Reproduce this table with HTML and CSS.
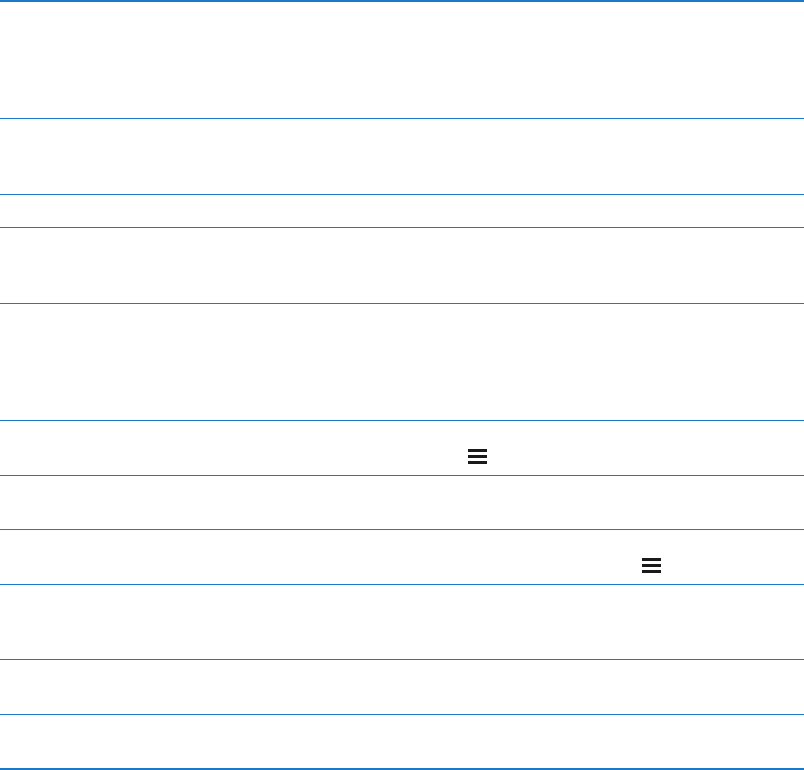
FILE: index.html
```html
<!doctype html>
<html lang="en">
<head>
  <meta charset="utf-8" />
  <meta name="viewport" content="width=device-width,initial-scale=1" />
  <title>Table</title>
  <link rel="stylesheet" href="styles.css">
</head>
<body>
  <div class="table">
    <div class="row r116"></div>
    <div class="row r75"></div>
    <div class="row r32"></div>
    <div class="row r75"></div>
    <div class="row r116"></div>
    <div class="row r54">
      <div class="cell c1">
        <svg class="menu" width="19" height="15" viewBox="0 0 19 15"><rect x="0" y="0" width="19" height="3"/><rect x="0" y="6" width="19" height="3"/><rect x="0" y="12" width="19" height="3"/></svg>
      </div>
    </div>
    <div class="row r53"></div>
    <div class="row r54">
      <div class="cell c2">
        <svg class="menu" width="19" height="15" viewBox="0 0 19 15"><rect x="0" y="0" width="19" height="3"/><rect x="0" y="6" width="19" height="3"/><rect x="0" y="12" width="19" height="3"/></svg>
      </div>
    </div>
    <div class="row r74"></div>
    <div class="row r54"></div>
    <div class="row r53 last"></div>
  </div>
</body>
</html>
```

FILE: styles.css
```css
body { margin:0; background:#fff; font-family: "Liberation Sans", Arial, sans-serif; }
.table { border-top:2px solid #1b79c8; }
.row { border-top:1px solid #1b79c8; box-sizing:content-box; }
.row:first-child { border-top:none; }
.row.last { border-bottom:2px solid #1b79c8; }
.r116 { height:116px; }
.r75 { height:75px; }
.r74 { height:74px; }
.r54 { height:54px; }
.r53 { height:53px; }
.r32 { height:32px; }
.cell { padding-top:28px; }
.c1 { padding-left:468px; }
.c2 { padding-left:642px; }
.menu { display:block; fill:#1a1a1a; }
```
